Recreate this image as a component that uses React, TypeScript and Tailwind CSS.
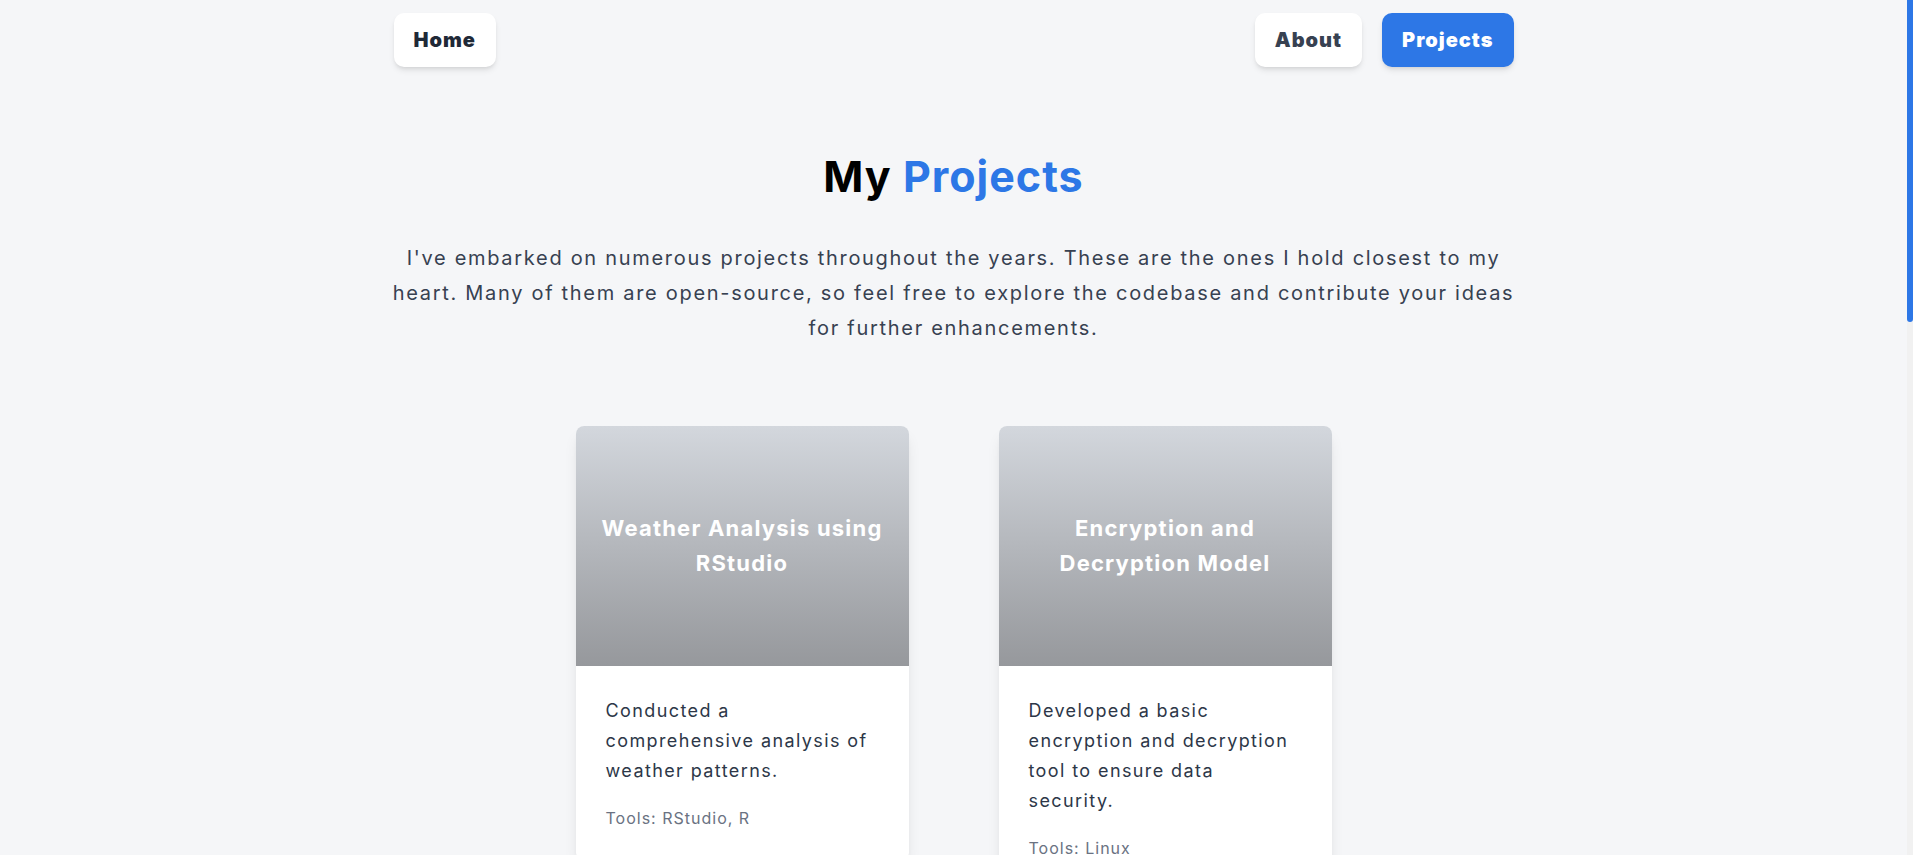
import React from "react";

interface Project {
  title: string;
  description: string;
  tools: string;
}

const projects: Project[] = [
  {
    title: "Weather Analysis using RStudio",
    description: "Conducted a comprehensive analysis of weather patterns.",
    tools: "RStudio, R",
  },
  {
    title: "Encryption and Decryption Model",
    description: "Developed a basic encryption and decryption tool to ensure data security.",
    tools: "Linux",
  },
  {
    title: "Personal Portfolio Website",
    description: "Designed and built a responsive portfolio to showcase my work.",
    tools: "React, Tailwind CSS",
  },
  {
    title: "Student Management System",
    description: "Created a simple system to manage student records and grades.",
    tools: "Java, MySQL",
  },
];

const NavButton = ({ label, className }: { label: string; className: string }) => (
  <a
    href="#"
    className={
      "h-[54px] px-5 flex items-center rounded-[10px] text-[20px] font-black tracking-[1px] shadow-md " + className
    }
  >
    {label}
  </a>
);

const ProjectCard = ({ project }: { project: Project }) => (
  <div className="w-[333px] bg-white rounded-lg overflow-hidden shadow-lg">
    <div className="h-[240px] px-5 flex items-center justify-center bg-linear-to-b from-[#d3d7dd] to-[#96989c]">
      <h3 className="text-white text-[22px] leading-[35px] font-bold tracking-[1.2px] text-center">
        {project.title}
      </h3>
    </div>
    <div className="p-[30px]">
      <p className="text-[18px] leading-[30px] tracking-[1.4px] text-[#2d3748]">{project.description}</p>
      <p className="mt-5 text-[16px] tracking-[1px] text-gray-500">Tools: {project.tools}</p>
    </div>
  </div>
);

export default function App() {
  return (
    <div className="h-screen flex bg-[#f5f6f8] font-['Inter','Liberation_Sans',sans-serif]">
      <main className="flex-1 overflow-y-auto [scrollbar-width:none]">
        <nav className="max-w-[1152px] mx-auto px-4 pt-[13px] flex justify-between">
          <NavButton label="Home" className="bg-white text-[#1f2937]" />
          <div className="flex gap-5">
            <NavButton label="About" className="bg-white text-[#374151]" />
            <NavButton label="Projects" className="bg-[#2d77e6] text-white" />
          </div>
        </nav>

        <section className="max-w-[1152px] mx-auto px-4 pb-[120px]">
          <h1 className="mt-[83px] text-center text-[43px] leading-[53px] font-bold tracking-[1px] text-black">
            My <span className="text-[#2d77e6]">Projects</span>
          </h1>
          <p className="-mx-2 mt-[38px] text-center text-[20px] leading-[35px] tracking-[1.7px] text-[#374151]">
            I've embarked on numerous projects throughout the years. These are the ones I hold closest to my heart.
            Many of them are open-source, so feel free to explore the codebase and contribute your ideas for further
            enhancements.
          </p>

          <div className="mt-[80px] flex flex-wrap justify-center items-start gap-x-[90px] gap-y-[60px]">
            {projects.map((p) => (
              <ProjectCard key={p.title} project={p} />
            ))}
          </div>
        </section>
      </main>
      <aside className="w-[6px] bg-[#f1f1f1]">
        <div className="h-[322px] bg-[#2d77e6] rounded-b-[3px]" />
      </aside>
    </div>
  );
}
